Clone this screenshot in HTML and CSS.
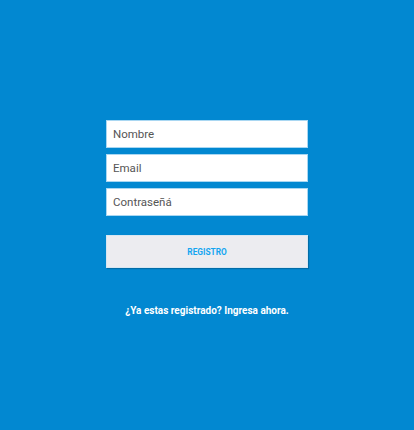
FILE: index.html
```html
<!DOCTYPE html>
<html lang="es">
<head>
<meta charset="utf-8">
<title>Registro</title>
<link rel="stylesheet" href="styles.css">
</head>
<body>
<main class="page">
  <form class="form">
    <div class="fields">
      <input class="field" type="text" placeholder="Nombre">
      <input class="field" type="email" placeholder="Email">
      <input class="field" type="password" placeholder="Contraseñá">
    </div>
    <button class="btn" type="button">REGISTRO</button>
    <p class="login">¿Ya estas registrado? Ingresa ahora.</p>
  </form>
</main>
</body>
</html>
```
FILE: styles.css
```css
html, body {
  margin: 0;
  padding: 0;
  height: 100%;
}
body {
  background: #0288d1;
  font-family: Roboto, "Liberation Sans", sans-serif;
}
.page {
  display: flex;
  justify-content: center;
  padding-top: 120px;
}
.form {
  width: 202px;
  display: flex;
  flex-direction: column;
}
.fields {
  display: flex;
  flex-direction: column;
  gap: 6px;
}
.field {
  box-sizing: border-box;
  height: 28px;
  width: 100%;
  margin: 0;
  padding: 0 6px;
  border: 1px solid #a9d7f2;
  background: #fff;
  font-family: Roboto, "Liberation Sans", sans-serif;
  font-size: 11.5px;
  color: #333;
  outline: none;
}
.field::placeholder {
  color: #555;
  opacity: 1;
}
.btn {
  box-sizing: border-box;
  margin-top: 19px;
  height: 33px;
  width: 100%;
  border: 1px solid #d6e6f2;
  background: #ececf0;
  color: #14a6f0;
  font-family: Roboto, "Liberation Sans", sans-serif;
  font-size: 8.3px;
  font-weight: 700;
  box-shadow: 1px 1px 1px rgba(0, 0, 0, 0.2);
  padding: 0;
}
.login {
  margin: 36px 0 0;
  text-align: center;
  color: #fff;
  font-size: 10px;
  font-weight: 700;
  line-height: 14px;
}
```
